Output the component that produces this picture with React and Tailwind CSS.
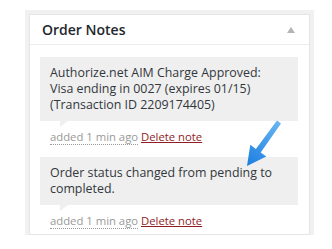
export default function App() {
  return (
    <div className="relative w-[332px] h-[249px] bg-white overflow-hidden" style={{ fontFamily: '"Open Sans", "Noto Sans", sans-serif' }}>
      <div className="pt-[10px] pl-[25px]">
        <div className="w-[289px] bg-[#f1f1f1] p-[4px] pb-[0px]">
          <div className="bg-white border border-[#e5e5e5]">
            <div className="h-[30px] flex items-center justify-between pl-[12px] pr-[14px] border-b border-[#eeeeee]">
              <span className="text-[14px] font-semibold text-[#23282d] leading-none">Order Notes</span>
              <svg width="8" height="6" viewBox="0 0 8 6"><polygon points="4,0 8,6 0,6" fill="#b4b4b4" /></svg>
            </div>
            <div className="pt-[12px] pl-[10px] pr-[11px] pb-[5px]">
              <div className="relative bg-[#efefef] px-[10px] py-[8px] text-[12.4px] leading-[16px] text-[#32373c] whitespace-nowrap">
                Authorize.net AIM Charge Approved:<br />
                Visa ending in 0027 (expires 01/15)<br />
                (Transaction ID 2209174405)
                <div className="absolute left-[20px] top-full w-0 h-0 border-t-[6px] border-r-[8px] border-t-[#efefef] border-r-transparent" />
              </div>
              <div className="mt-[8px] pl-[10px] text-[11.3px] leading-[16px] whitespace-nowrap">
                <span className="text-[#999999] border-b border-dotted border-[#999999]">added 1 min ago</span>{' '}
                <a className="text-[#8f1d24] underline font-medium">Delete note</a>
              </div>
              <div className="relative mt-[12px] bg-[#efefef] px-[10px] py-[8px] text-[12.4px] leading-[16px] text-[#32373c] whitespace-nowrap">
                Order status changed from pending to<br />
                completed.
                <div className="absolute left-[20px] top-full w-0 h-0 border-t-[6px] border-r-[8px] border-t-[#efefef] border-r-transparent" />
              </div>
              <div className="mt-[8px] pl-[10px] text-[11.3px] leading-[16px] whitespace-nowrap">
                <span className="text-[#999999] border-b border-dotted border-[#999999]">added 1 min ago</span>{' '}
                <a className="text-[#8f1d24] underline font-medium">Delete note</a>
              </div>
            </div>
          </div>
        </div>
      </div>
      <svg className="absolute left-0 top-0" width="332" height="249" viewBox="0 0 332 249">
        <defs>
          <linearGradient id="ag" x1="279" y1="122" x2="247" y2="166" gradientUnits="userSpaceOnUse">
            <stop offset="0" stopColor="#6ab4f2" />
            <stop offset="1" stopColor="#1a7fe0" />
          </linearGradient>
        </defs>
        <polygon points="277,120.5 255.9,148.9 250.3,144.8 247,166 266.3,156.6 260.7,152.5 281,123.5" fill="url(#ag)" />
      </svg>
    </div>
  );
}
